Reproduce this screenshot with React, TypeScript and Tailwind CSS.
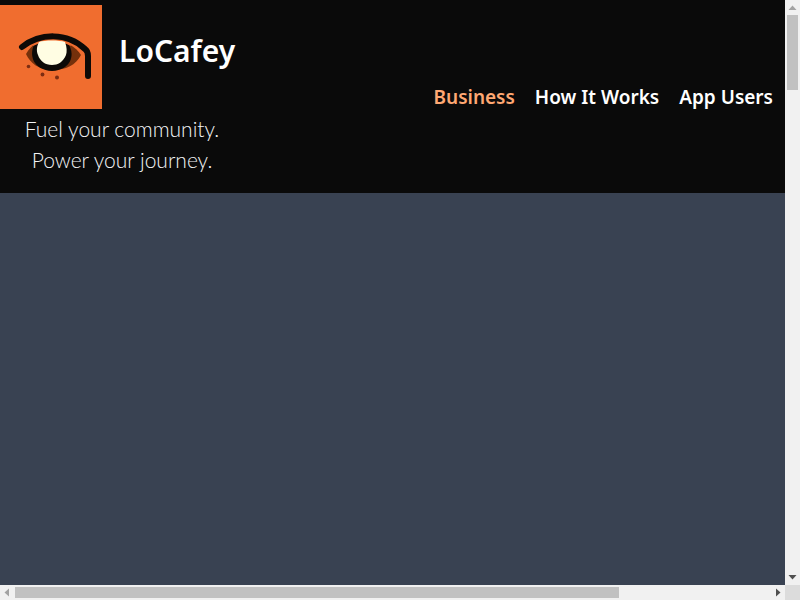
import React from 'react';

interface NavItem {
  label: string;
  href: string;
  active?: boolean;
}

const navItems: NavItem[] = [
  { label: 'Business', href: '#business', active: true },
  { label: 'How It Works', href: '#how-it-works' },
  { label: 'App Users', href: '#app-users' },
];

const Logo: React.FC = () => (
  <svg className="h-[104px] w-[102px] shrink-0" viewBox="0 0 102 104" role="img" aria-label="LoCafey logo">
    <rect width="102" height="104" fill="#f06d2f" />
    <path d="M26 49C31 40 39 35 52 35C65 35 76 42 81 50C76 60 66 65 52 65C39 65 30 58 26 49Z" fill="#74300b" />
    <path d="M34 40C29 50 33 65 52 66C71 65 75 50 69 40C58 34 44 34 34 40Z" fill="#0d0a07" />
    <path d="M33 41C45 35 60 35 71 41L69 36C60 32 43 32 34 36Z" fill="#f06d2f" />
    <path d="M39 37C44 35 60 35 65 37C67 42 67 47 66 50C63 57 58 60 52 60C45 60 40 56 38 50C36 45 37 41 39 37Z" fill="#fffde3" />
    <path d="M22 42C40 28 67 27 85 44Q88 46 88 51V71" fill="none" stroke="#0d0a07" strokeWidth="6" strokeLinecap="round" strokeLinejoin="round" />
    <circle cx="28.5" cy="61.5" r="1.8" fill="#7c2d12" />
    <circle cx="42.5" cy="69.5" r="1.9" fill="#7c2d12" />
    <circle cx="57" cy="72.5" r="2" fill="#7c2d12" />
  </svg>
);

const Header: React.FC = () => (
  <header className="flex items-end justify-between bg-[#0a0a0a] pt-[5px] pr-3">
    <div className="w-[244px] shrink-0 pb-[18px]">
      <div className="flex gap-[17px]">
        <Logo />
        <h1 className="pt-6 text-[30px] leading-[44px] font-semibold text-white">LoCafey</h1>
      </div>
      <p className="pt-1 text-center font-[Lato,sans-serif] text-[21px] leading-[31px] font-light text-gray-100">
        Fuel your community.
        <br />
        Power your journey.
      </p>
    </div>
    <nav className="flex gap-5 pb-20 whitespace-nowrap text-[19px] leading-8 font-semibold">
      {navItems.map((item) => (
        <a key={item.label} href={item.href} className={item.active ? 'text-[#ffa873]' : 'text-white'}>
          {item.label}
        </a>
      ))}
    </nav>
  </header>
);

const Arrow: React.FC<{ points: string; color: string }> = ({ points, color }) => (
  <svg className="size-[15px] shrink-0" viewBox="0 0 15 15" aria-hidden="true">
    <polygon points={points} fill={color} />
  </svg>
);

const App: React.FC = () => {
  return (
    <div className="grid h-screen grid-cols-[1fr_15px] grid-rows-[1fr_15px] overflow-hidden bg-[#f1f1f1] font-['Noto_Sans',sans-serif]">
      <div className="flex min-h-0 min-w-0 flex-col overflow-hidden">
        <Header />
        <main className="flex-1 bg-[#394252]" />
      </div>
      <div className="flex flex-col">
        <Arrow points="3.5,10 11.5,10 7.5,5.5" color="#a3a3a3" />
        <div className="flex-1 px-0.5">
          <div className="h-[13.6%] bg-[#c1c1c1]" />
        </div>
        <Arrow points="3.5,5 11.5,5 7.5,9.5" color="#505050" />
      </div>
      <div className="flex">
        <Arrow points="9,3.5 9,11.5 4.5,7.5" color="#a3a3a3" />
        <div className="flex-1 py-0.5">
          <div className="h-full w-4/5 bg-[#c1c1c1]" />
        </div>
        <Arrow points="6,3.5 6,11.5 10.5,7.5" color="#505050" />
      </div>
      <div className="bg-[#dcdcdc]" />
    </div>
  );
};

export default App;
